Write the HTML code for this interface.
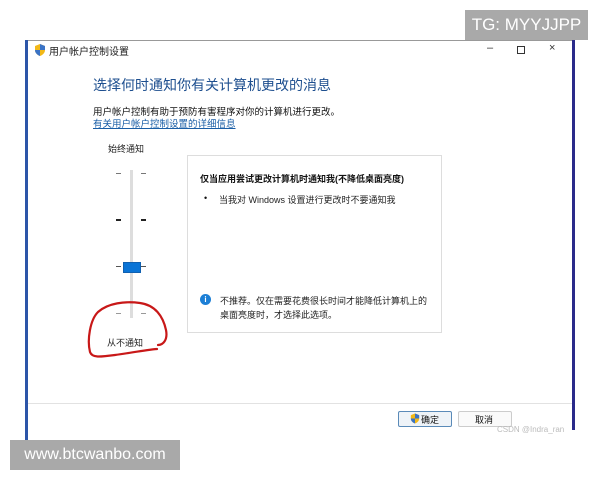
<!DOCTYPE html>
<html><head><meta charset="utf-8"><style>
body{margin:0;width:600px;height:480px;background:#fff;position:relative;overflow:hidden;font-family:"Liberation Sans","Noto Sans CJK SC",sans-serif;}
.a{position:absolute;white-space:nowrap}
</style></head><body>
<div class="a" style="left:25px;top:40px;width:550px;height:1px;background:#999"></div>
<div class="a" style="left:25px;top:40px;width:3px;height:400px;background:#2c55a8"></div>
<div class="a" style="left:572px;top:40px;width:3px;height:390px;background:#2a2a8a"></div>
<div class="a" style="left:465px;top:10px;width:123px;height:30px;background:#a9a9a9;color:#fff;font-size:17px;line-height:30px;text-align:center">TG: MYYJJPP</div>
<svg class="a" style="left:34px;top:44px" width="12" height="12" viewBox="0 0 12 12"><path d="M6 0L11 2V6C11 9 8.5 11 6 12C3.5 11 1 9 1 6V2Z" fill="#f2b817"/><path d="M6 0L11 2V6H6ZM1 6H6V12C3.5 11 1 9 1 6Z" fill="#3a73c6"/></svg>
<div class="a" style="left:49px;top:43px;font-size:10px;color:#222">用户帐户控制设置</div>
<div class="a" style="left:487px;top:42px;font-size:11px;color:#333">–</div>
<div class="a" style="left:517px;top:46px;width:6px;height:6px;border:1px solid #333"></div>
<div class="a" style="left:549px;top:42px;font-size:11px;color:#333">×</div>
<div class="a" style="left:93px;top:75px;font-size:14px;color:#1e4f8f">选择何时通知你有关计算机更改的消息</div>
<div class="a" style="left:93px;top:104px;font-size:9.5px;color:#111">用户帐户控制有助于预防有害程序对你的计算机进行更改。</div>
<div class="a" style="left:93px;top:116px;font-size:9.5px;color:#1a5ea6;text-decoration:underline">有关用户帐户控制设置的详细信息</div>
<div class="a" style="left:108px;top:142px;font-size:9px;color:#222">始终通知</div>
<div class="a" style="left:130px;top:170px;width:3px;height:148px;background:#ddd"></div>
<div class="a" style="left:116px;top:173px;width:5px;height:1px;background:#777"></div><div class="a" style="left:141px;top:173px;width:5px;height:1px;background:#777"></div>
<div class="a" style="left:116px;top:219px;width:5px;height:2px;background:#222"></div><div class="a" style="left:141px;top:219px;width:5px;height:2px;background:#222"></div>
<div class="a" style="left:116px;top:266px;width:5px;height:1px;background:#555"></div><div class="a" style="left:141px;top:266px;width:5px;height:1px;background:#555"></div>
<div class="a" style="left:116px;top:313px;width:5px;height:1px;background:#999"></div><div class="a" style="left:141px;top:313px;width:5px;height:1px;background:#999"></div>
<div class="a" style="left:123px;top:262px;width:16px;height:9px;background:#0a74d6;border:1px solid #1060b0"></div>
<div class="a" style="left:107px;top:336px;font-size:9px;color:#222">从不通知</div>
<svg class="a" style="left:0;top:0" width="600" height="480"><path d="M158 345C163 345 168 340 166 330C163 316 155 305 140 303C125 301 108 303 98 312C90 320 87 340 90 352C92 358 100 357 115 355C130 353 145 350 157 349" fill="none" stroke="#c81818" stroke-width="2.2" stroke-linecap="round"/></svg>
<div class="a" style="left:187px;top:155px;width:253px;height:176px;border:1px solid #ddd;background:#fff"></div>
<div class="a" style="left:200px;top:172px;font-size:9px;font-weight:bold;color:#111">仅当应用尝试更改计算机时通知我(不降低桌面亮度)</div>
<div class="a" style="left:204px;top:193px;font-size:9px;color:#111">•</div>
<div class="a" style="left:219px;top:193px;font-size:9px;color:#222">当我对 Windows 设置进行更改时不要通知我</div>
<div class="a" style="left:200px;top:294px;width:11px;height:11px;border-radius:50%;background:#1c7fd6;color:#fff;font-size:8px;line-height:11px;text-align:center;font-weight:bold">i</div>
<div class="a" style="left:220px;top:294px;font-size:9px;color:#222;line-height:14px">不推荐。仅在需要花费很长时间才能降低计算机上的<br>桌面亮度时，才选择此选项。</div>
<div class="a" style="left:28px;top:403px;width:544px;height:1px;background:#e2e2e2"></div>
<div class="a" style="left:398px;top:411px;width:52px;height:14px;border:1px solid #5a8ab8;background:#eef3f8;border-radius:2px"></div>
<svg class="a" style="left:410px;top:413px" width="10" height="11" viewBox="0 0 12 12"><path d="M6 0L11 2V6C11 9 8.5 11 6 12C3.5 11 1 9 1 6V2Z" fill="#f2b817"/><path d="M6 0L11 2V6H6ZM1 6H6V12C3.5 11 1 9 1 6Z" fill="#3a73c6"/></svg>
<div class="a" style="left:421px;top:413px;font-size:9px;color:#111">确定</div>
<div class="a" style="left:458px;top:411px;width:52px;height:14px;border:1px solid #ccc;background:#fafafa;border-radius:2px"></div>
<div class="a" style="left:475px;top:413px;font-size:9px;color:#111">取消</div>
<div class="a" style="left:497px;top:425px;font-size:8px;color:#bbb">CSDN @Indra_ran</div>
<div class="a" style="left:10px;top:440px;width:170px;height:30px;background:#a9a9a9;color:#fff;font-size:16px;line-height:30px;text-align:center">www.btcwanbo.com</div>
</body></html>
